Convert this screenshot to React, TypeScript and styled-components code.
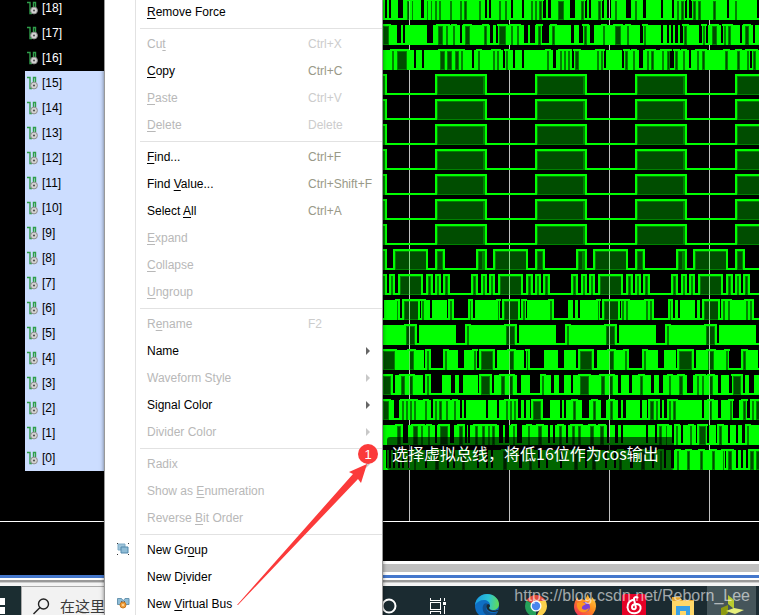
import React from "react";
import styled, { createGlobalStyle } from "styled-components";

const GlobalStyle = createGlobalStyle`
  * { box-sizing: border-box; }
  body { margin: 0; overflow: hidden; background: #000; }
  button, input { font: inherit; }
`;

const Page = styled.div`
  position: relative;
  display: flex;
  flex-direction: column;
  height: 100vh;
  overflow: hidden;
  font-family: "Liberation Sans", "Noto Sans CJK SC", sans-serif;
  font-size: 12px;
`;

const Workspace = styled.main`
  display: grid;
  grid-template-columns: 380px 1fr;
  flex: 1;
  min-height: 0;
  overflow: hidden;
  background: #000;
`;

const Pane = styled.section`
  display: flex;
  flex-direction: column;
  min-width: 0;
  overflow: hidden;
`;

const SignalList = styled.ul`
  height: 522px;
  flex: none;
  margin: 0;
  padding: 0 0 0 25px;
  list-style: none;
  overflow: hidden;
  border-bottom: 1px solid #fff;

  li:first-child { margin-top: -4px; }
`;

const SignalRow = styled.li<{ $selected: boolean }>`
  display: flex;
  align-items: center;
  gap: 2px;
  height: 25px;
  padding: 0 0 2px 2px;
  color: ${(p) => (p.$selected ? "#000" : "#fff")};
  background: ${(p) => (p.$selected ? "#ccddff" : "#000")};
`;

const WaveView = styled.div`
  flex: none;
  height: 522px;
  overflow: hidden;
  border-bottom: 1px solid #fff;

  svg { display: block; }
`;

const ScrollTrack = styled.div`
  height: 14px;
  margin-top: auto;
  flex: none;
  background: #c0c0c0;
  border: solid #fff;
  border-width: 3px 0;
`;

const FrameEdge = styled.div`
  flex: none;
  height: 11px;
  background: linear-gradient(#4477cc 0 3px, #fff 3px 5px, #999 5px 7px, #ccc 7px 8px, #f4f4f4 8px);
`;

const Menu = styled.div`
  position: absolute;
  top: 0;
  bottom: 0;
  left: 104px;
  width: 279px;
  overflow: hidden;
  border: solid #999;
  border-width: 0 1px;
  background: linear-gradient(90deg, #fff 30px, #e2e2e2 30px 31px, #fff 31px);
  box-shadow: 0 0 4px rgba(0, 0, 0, 0.5);

  > :first-child { margin-top: -2px; }
`;

const MenuItem = styled.button`
  display: grid;
  grid-template-columns: 42px 161px 1fr 16px;
  align-items: center;
  width: 100%;
  height: 27px;
  padding: 0;
  border: 0;
  background: none;
  color: #000;
  text-align: left;
  white-space: nowrap;

  &:disabled { color: #b8b8b8; }
  u { text-underline-offset: 2px; }
`;

const IconCell = styled.span`
  display: flex;
  padding-left: 12px;
`;

const Shortcut = styled.span<{ $dim?: boolean }>`
  color: ${(p) => (p.$dim ? "#cccccc" : "#999988")};
`;

const Divider = styled.hr`
  height: 1px;
  margin: 3px 0 1px 35px;
  border: 0;
  background: #e2e2e2;
`;

const Note = styled.div`
  position: absolute;
  top: 437px;
  left: 387px;
  padding: 0 15px 0 5px;
  border-radius: 3px;
  background: rgba(0, 0, 0, 0.6);
  color: #fff;
  font: 16px/33px "Noto Sans CJK SC", sans-serif;
  white-space: nowrap;
`;

const Marker = styled.svg`
  position: absolute;
  top: 440px;
  left: 230px;
  pointer-events: none;
`;

const Taskbar = styled.footer`
  display: flex;
  flex: none;
  height: 40px;
  margin-bottom: -11px;
  background: #1b2b31;
`;

const StartButton = styled.button`
  display: flex;
  align-items: center;
  width: 21px;
  padding: 0;
  border: 0;
  background: #1b2d31;
`;

const SearchBox = styled.label`
  display: flex;
  align-items: center;
  gap: 10px;
  width: 343px;
  padding-left: 11px;
  background: #f2f2f2;
  border: 1px solid #aaa;
  color: #222;

  input {
    flex: 1;
    min-width: 0;
    padding: 0;
    border: 0;
    background: none;
    font: 15px/24px "Noto Sans CJK SC", sans-serif;
  }
  input::placeholder { color: #3a3a3a; }
`;

const TaskButton = styled.button<{ $active?: boolean }>`
  display: flex;
  align-items: center;
  justify-content: center;
  flex: none;
  width: 49px;
  padding: 0;
  border: 0;
  background: ${(p) => (p.$active ? "#45555a" : "none")};
`;

const Watermark = styled.span`
  position: absolute;
  right: 9px;
  bottom: 8px;
  color: rgba(255, 255, 255, 0.6);
  font-size: 16px;
  line-height: 22px;
`;

/*
 * Waveform rows. Each run is a kind and the time at which it ends:
 * s = too dense to resolve, g = low, d = high. A "|" moves the time base
 * one screen of 570 units on; a row with a period repeats to the end.
 */
const UNITS = 3;
const START = 9;
const SPAN = 570;
const END = 1140;

interface Wave {
  runs: string;
  period?: boolean;
}

const square: Wave = { runs: "d15 s21 g165 s171 d309", period: true };

const waves: Wave[] = [
  { runs: "s15 g21 s27 g33 s54 g69 s80 d90 s96 d100 s123 g132 s141 d145 s152 d156 s165 d170 s176 d182 s210 d215 s240 d245 s252 d261 s297 d303 s315 g321 s327 g333 s357 d363 s375 d381 s393 g399 s426 g432 s453 d459 s465 d471 s477 d486 s489 g498 s504 g513 s534 d552 s570|g15 s33 d42 s45 g51 s57 g63 s84 d93 s96 g102 s111 g123 s135 d141 s168 g183 s195 d201 s219 g228 s273 g279 s306 g312 s321 d327 s333 d342 s345 g351 s357 g366 s369 d378 s384 d393 s429 d438 s471 g477 s495 d501 s561 g570" },
  { runs: "d27 s51 g63 s69 g75 s141 g159 s174 d189 s198 d204 s219 d225 s240 g246 s255 d270 s312 d321 s330 g339 s348 g354 s357 d378 s393 d399 s411 d417 s432 g444 s450 g465 s474 d483 s486 g507 s516 d525 s570|s3 g12 s27 g39 s42 d51 s60 g72 s99 d105 s135 d153 s171 d177 s210 g219 s222 d228 s273 g279 s291 g297 s303 g309 s315 g324 s330 g339 s342 d351 s387 g396 s399 d405 s408 g414 s426 d441 s453 g459 s462 d468 s474 d483 s510 g516 s525 d537 s549 g555 s570" },
  { runs: "s36 d42 s51 d81 s102 g108 s126 g132 s180 d195 s201 d216 s225 d237 s243 d249 s276 g282 s294 d300 s339 d345 s351 d357 s369 g375 s378 d384 s399 g405 s426 g432 s501 d507 s519 g528 s540 d546 s552 d558 s564 d570|s6 g12 s15 d27 s81 d87 s93 d99 s102 g108 s156 g162 s165 d174 s189 d195 s207 g219 s231 d237 s243 d252 s276 d282 s291 d300 g312 s315 d324 s339 d345 s357 g363 s381 d387 s396 d405 s465 d474 s501 d510 s531 d537 s540 g546 s549 d558 s570" },
  square, square, square, square, square, square, square,
  { runs: "d15 s21 g39 s45 d138 s144 g165 s171 d189 s195 g288 s294 d309", period: true },
  { runs: "d15 s21 g27 s33 d39 s45 g54 s60 d123 s129 g138 s144 d153 s159 g165 s171 d177 s183 g189 s195 d204 s210 g273 s279 d288 s294 g303 s309", period: true },
  { runs: "g12 s51 d54 s60 g66 s72 d114 s120 g123 s126 d133 s150 g156 s201 g204 s210 d216 s222 g264 s270 d273 s279 g285 s354 d357 s360 g366 s372 d414 s420 g423 s430 d435 s438 g440 s510 d516 s522 g564 s570|s9 g15 s24 g30 s84 d87 s90 g96 s102 d144 s150 g153 s156 d162 s168 d174 s228 d234 s240 d246 s252 g294 s300 d303 s309 g315 s324 g330 s375 g381 s390 g396 s402 d444 s450 g453 s459 d465 s474 d480 s528 d534 s540 d546 s552 g570" },
  { runs: "s78 d105 s111 g117 s228 g255 s261 d267 s309", period: true },
  { runs: "d45 s87 d102 s132 g135 s141 d147 s153 g189 s195 d201 s234 g252 s282 d288 s291 g297 s303 d339 s345 g351 s387 d402 s432 g438 s441 d444 s450 g492 s534 g552 s570|s18 g24 s30 d66 s72 g81 s117 d132 s165 d171 s177 g216 s222 d228 s264 g282 s318 g321 s327 d366 s372 g378 s414 d432 s468 d474 s477 g513 s519 d528 s564 g570" },
  { runs: "d33 s39 g45 s63 d75 s87 d99 s129 g135 s141 d147 s153 g186 s213 g225 s237 g249 s294 g297 s303 d330 s336 g342 s363 d375 s387 d399 s411 g423 s450 g480 s486 d492 s513 g522 s537 g552 s570|s3 g9 s30 d57 s93 d105 s117 d129 s144 g153 s177 g186 s210 d219 s243 g252 s267 g279 s297 d303 s327 d339 s351 g369 s381 d387 s396 d402 s417 d429 s444 g453 s477 g486 s489 d513 s519 g525 s537 g552 s570" },
  { runs: "d27 s42 g57 s66 d72 s78 d84 s90 d96 s102 d108 s135 d141 s153 g159 s165 d171 s177 d186 s198 d204 s222 d228 s240 g246 s252 g258 s318 g324 s351 g357 s378 d384 s390 d396 s402 d408 s414 g423 s432 g438 s450 g453 s459 d483 s489 g510 s540 g546 s552 g558 s570|s9 d18 s36 g57 s69 d78 s93 g108 s120 d129 s144 g153 s159 g168 s210 g216 s231 g234 s240 d252 s258 d264 s270 g276 s282 g291 s297 d303 s309 d318 s396 g402 s417 d426 s444 g453 s480 d486 s489 g507 s519 d528 s531 g540 s546 d552 s558 d570" },
  { runs: "s51 d63 s69 g84 s99 d114 s123 d129 s144 d150 s165 g171 s180 d204 s210 g222 s237 d249 s255 g261 s264 g270 s285 d294 s306 d315 s324 d330 s336 d345 s357 g369 s375 g387 s399 d405 s411 g426 s444 d450 s474 d486 s504 g510 s519 g525 s537 d546 s558 g564 s570|s6 d15 s24 d33 s60 d72 s90 d102 s111 g120 s135 g144 s153 g159 s228 g234 s255 g261 s267 d276 s288 d291 s306 g312 s318 d324 s333 g339 s360 d366 s378 g381 s387 d408 s411 g417 s438 g441 s447 d456 s474 g480 s498 g504 s516 g525 s531 d537 s570" },
  { runs: "s18 g21 s27 g33 s39 g45 s54 g60 s66 g72 s84 g90 s102 d108 s135 g141 s165 d177 s201 g207 s219 g225 s246 d255 s291 g297 s318 g324 s333 g339 s369 d381 s417 g426 s447 d456 s474 g480 s498 g504 s540 g546 s570|s12 d24 s45 g51 s66 d78 s105 g111 s132 g138 s147 d156 s180 g189 s213 d225 s246 g252 s270 d276 s282 g288 s303 g312 s321 d327 s351 d360 s390 d399 s426 d435 s459 d462 s465 g468 s474 d486 s498 g504 s513 g519 s528 g534 s540 d552 s558 d570" },
];

interface Run {
  kind: string;
  from: number;
  to: number;
}

function parse({ runs, period }: Wave): Run[] {
  const out: Run[] = [];
  let at = START;
  const read = (text: string, base: number) =>
    text.split(" ").forEach((token) => {
      const to = Number(token.slice(1)) + base;
      out.push({ kind: token[0], from: Math.round(at / UNITS), to: Math.round(to / UNITS) });
      at = to;
    });
  if (period) {
    for (let base = 0; base < END; base += 300) read(runs, base);
  } else {
    runs.split("|").forEach((part, i) => read(part, i * SPAN));
  }
  return out;
}

function WaveRow({ wave, y }: { wave: Wave; y: number }) {
  return (
    <g transform={`translate(0 ${y})`} shapeRendering="crispEdges">
      {parse(wave).map(({ kind, from, to }, i) => {
        const w = to - from;
        if (kind === "s") return <rect key={i} x={from} y={1} width={w} height={20} fill="#0f0" />;
        if (kind === "g") return <rect key={i} x={from} y={19} width={w} height={2} fill="#0f0" />;
        return (
          <g key={i}>
            <rect x={from - 2} width={w + 4} height={2} fill="#0f0" />
            <rect x={from} y={2} width={w} height={19} fill="#0f0" fillOpacity={0.3} />
            <path
              d={`M${from} 2h${w}v1h${-w}zM${from} 3h1v18h-1z${w > 1 && w < 14 ? `M${to - 1} 3h1v18h-1z` : ""}M${from} 20h${w}v1h${-w}z`}
              fill="#0f0"
              fillOpacity={0.3}
            />
          </g>
        );
      })}
    </g>
  );
}

function Waveforms() {
  return (
    <svg width="380" height="521" role="img" aria-label="Waveforms">
      {[29, 129, 229, 329].map((x) => (
        <rect key={x} x={x} width="1" height="521" fill="#c0c0c0" />
      ))}
      {waves.map((wave, i) => (
        <WaveRow key={i} wave={wave} y={i * 25 - 1} />
      ))}
    </svg>
  );
}

function SignalIcon() {
  return (
    <svg width="13" height="14" viewBox="0 0 13 14">
      <path d="M0 1.5h3v11h2M6.5 8V1.5h2V6" fill="none" stroke="#2f9e4a" strokeWidth="1.4" />
      <circle cx="7" cy="9.5" r="3.4" fill="#d4d4d4" stroke="#8d8d8d" />
      <circle cx="7" cy="9.5" r="1.1" fill="#555" />
    </svg>
  );
}

function GroupIcon() {
  return (
    <svg width="13" height="13" viewBox="0 0 13 13">
      <path d="M1 1h7v6H1z" fill="#9cc3da" stroke="#7fabc6" />
      <path d="M4 4h7v6H4z" fill="#8fbcd6" stroke="#5288ab" />
      <path d="M0 0h1v1H0zM11 0h1v1h-1zM0 11h1v1H0zM11 11h1v1h-1z" fill="#333" />
    </svg>
  );
}

function BusIcon() {
  return (
    <svg width="13" height="13" viewBox="0 0 13 13">
      <path d="M.5 1.5h4l1.5 2-1.5 4h-4zM12 1.500H8L6.500 3.500 8 7.500h4z" fill="#8fbcd6" stroke="#6795b0" />
      <path d="M4 4l2 2 2-2" fill="none" stroke="#666" />
      <circle cx="6" cy="8" r="3" fill="#f0a040" stroke="#c9781d" />
      <circle cx="6" cy="8" r="1" fill="#ffe2b0" />
    </svg>
  );
}

interface Item {
  label: string;
  keys?: string;
  off?: boolean;
  sub?: boolean;
  icon?: React.ReactNode;
}

const groups: Item[][] = [
  [{ label: "&Remove Force" }],
  [
    { label: "Cu&t", keys: "Ctrl+X", off: true },
    { label: "&Copy", keys: "Ctrl+C" },
    { label: "&Paste", keys: "Ctrl+V", off: true },
    { label: "&Delete", keys: "Delete", off: true },
  ],
  [
    { label: "&Find...", keys: "Ctrl+F" },
    { label: "Find &Value...", keys: "Ctrl+Shift+F" },
    { label: "Select &All", keys: "Ctrl+A" },
    { label: "&Expand", off: true },
    { label: "&Collapse", off: true },
    { label: "&Ungroup", off: true },
  ],
  [
    { label: "R&ename", keys: "F2", off: true },
    { label: "Name", sub: true },
    { label: "Waveform Style", sub: true, off: true },
    { label: "Signal Color", sub: true },
    { label: "Divider Color", sub: true, off: true },
  ],
  [
    { label: "Radix", sub: true, off: true },
    { label: "Show as &Enumeration", off: true },
    { label: "Reverse &Bit Order", off: true },
  ],
  [
    { label: "New Gr&oup", icon: <GroupIcon /> },
    { label: "New D&ivider" },
    { label: "New &Virtual Bus", icon: <BusIcon /> },
  ],
];

function Label({ text }: { text: string }) {
  const at = text.indexOf("&");
  if (at < 0) return <span>{text}</span>;
  return (
    <span>
      {text.slice(0, at)}
      <u>{text[at + 1]}</u>
      {text.slice(at + 2)}
    </span>
  );
}

function ContextMenu() {
  return (
    <Menu role="menu">
      {groups.map((items, g) => (
        <React.Fragment key={g}>
          {g > 0 && <Divider />}
          {items.map((item) => (
            <MenuItem key={item.label} role="menuitem" disabled={item.off}>
              <IconCell>{item.icon}</IconCell>
              <Label text={item.label} />
              <Shortcut $dim={item.off}>{item.keys}</Shortcut>
              {item.sub && (
                <svg width="5" height="8" viewBox="0 0 5 8">
                  <path d="M0 0l4 4-4 4z" fill={item.off ? "#c8c8c8" : "#666"} />
                </svg>
              )}
            </MenuItem>
          ))}
        </React.Fragment>
      ))}
    </Menu>
  );
}

const Cortana = () => (
  <svg width="18" height="18"><circle cx="9" cy="9" r="6.5" fill="none" stroke="#fff" strokeWidth="2" /></svg>
);

const TaskView = () => (
  <svg width="18" height="16" viewBox="0 0 18 16" fill="none" stroke="#fff" shapeRendering="crispEdges">
    <path d="M1.5 0v2.5h10V0M1.5 16v-2.5h10V16M1.5 4.5h10v7h-10zM15.5 0v3M15.5 8v8" />
    <path d="M14 4h3v3h-3z" fill="#fff" stroke="none" />
  </svg>
);

const Edge = () => (
  <svg width="26" height="26" viewBox="0 0 26 26">
    <defs>
      <linearGradient id="edgeTop" x1="0" x2="1" y1=".4" y2=".5">
        <stop offset="0" stopColor="#1a9be0" /><stop offset=".55" stopColor="#2cc3d5" /><stop offset="1" stopColor="#62dc55" />
      </linearGradient>
    </defs>
    <circle cx="13" cy="13" r="12" fill="#0f6fc4" />
    <path d="M1 12C2 5 7 1 13 1c7 0 12 5 12 10 0 4-3 6-6 6-2 0-4-1-4-2 0-1 1-1 1-3 0-3-3-5-6-5-4 0-7 2-9 5z" fill="url(#edgeTop)" />
    <path d="M10 11c-3 4-1 11 6 13 3 0 6-2 8-5-5 2-11 1-12-4 0-2 1-3 2-4-1-1-3-1-4 0z" fill="#11508f" />
    <path d="M14 11c-2 1-2 3-1 5 2 3 7 4 11 2 0-1 0-1-1-1-2 1-7 1-8-2 0-1 1-1 1-2s-1-2-2-2z" fill="#1b2b31" />
  </svg>
);

const Chrome = () => (
  <svg width="24" height="24" viewBox="0 0 24 24">
    <path d="M12 12L2.5 6.5a11 11 0 0 1 19 0z" fill="#e24a3b" />
    <path d="M12 12v11A11 11 0 0 1 2.5 6.5z" fill="#25a05a" />
    <path d="M12 7h9.8a11 11 0 0 1-9.800 16l4.300-8.500z" fill="#fcd04b" />
    <circle cx="12" cy="12" r="5.5" fill="#fff" /><circle cx="12" cy="12" r="4.2" fill="#4a86ee" />
  </svg>
);

const Firefox = () => (
  <svg width="24" height="24" viewBox="0 0 24 24">
    <defs>
      <linearGradient id="fox" x1="1" x2=".2" y1="0" y2="1">
        <stop offset="0" stopColor="#ffe14a" /><stop offset=".5" stopColor="#ff8a1e" /><stop offset="1" stopColor="#f0305c" />
      </linearGradient>
    </defs>
    <path d="M15 0c0 3 2 4 3 6 1-1 1-2 1-3 3 3 4 6 4 9a11 11 0 0 1-22 1c0-4 1-7 4-10 0 2 0 3 1 3 2-1 4-1 6 0 1-2 2-4 3-6z" fill="url(#fox)" />
    <circle cx="12" cy="13" r="5" fill="#7a41d8" />
    <path d="M4 9c4-2 7-1 9 1-1 1-3 1-4 3-1 3 4 4 7 1-1 6-11 6-12-2z" fill="#ff961f" />
  </svg>
);

const Netease = () => (
  <svg width="24" height="24" viewBox="0 0 24 24">
    <rect width="24" height="24" rx="2" fill="#e60026" />
    <path
      d="M15.5 3.500c-2-1-4 0-3.500 2l1.800 7.500c.4 3-3.800 3-3.800 0 0-3.500 7-4.500 8.500-.5 1.800 8-12 9.500-13 1 0-4 2-6.500 5-7.500"
      fill="none"
      stroke="#fff"
      strokeWidth="2"
      strokeLinecap="round"
    />
  </svg>
);

const Explorer = () => (
  <svg width="22" height="20" viewBox="0 0 22 20">
    <path d="M0 1h8l2 3h12v15H0z" fill="#e3a52d" />
    <path d="M0 5h22v14H0z" fill="#ffd768" />
    <path d="M4 10h14v10h-4v-5H8v5H4z" fill="#3aa0e4" />
  </svg>
);

const Vivado = () => (
  <svg width="24" height="24" viewBox="0 0 24 24">
    <path d="M8 1l6 5v9l-6-5z" fill="#b9cc30" />
    <path d="M1 14l7-3v8l-7 5z" fill="#8d9a10" />
    <path d="M6 17l8-3 10 2-9 4z" fill="#e6ef7c" />
  </svg>
);

const apps: [string, React.ReactNode][] = [
  ["Cortana", <Cortana />],
  ["Task View", <TaskView />],
  ["Edge", <Edge />],
  ["Chrome", <Chrome />],
  ["Firefox", <Firefox />],
  ["NetEase Music", <Netease />],
  ["File Explorer", <Explorer />],
  ["Vivado", <Vivado />],
];

export default function App() {
  return (
    <Page>
      <GlobalStyle />
      <Workspace>
        <Pane>
          <SignalList>
            {waves.map((_, i) => (
              <SignalRow key={i} $selected={18 - i < 16}>
                <SignalIcon />
                <span>[{18 - i}]</span>
              </SignalRow>
            ))}
          </SignalList>
        </Pane>
        <Pane>
          <WaveView><Waveforms /></WaveView>
          <ScrollTrack />
        </Pane>
      </Workspace>
      <FrameEdge />
      <Taskbar>
        <StartButton aria-label="Start">
          <svg width="6" height="16" viewBox="0 0 6 16"><path d="M0 0h5v7H0zM0 9h5v7H0z" fill="#fff" /></svg>
        </StartButton>
        <SearchBox>
          <svg width="17" height="17" viewBox="0 0 17 17" fill="none" stroke="#222" strokeWidth="1.4">
            <circle cx="10.5" cy="6" r="5" /><path d="M7 9.500L.5 16" />
          </svg>
          <input aria-label="搜索" placeholder="在这里输入你要搜索的内容" />
        </SearchBox>
        {apps.map(([name, icon]) => (
          <TaskButton key={name} aria-label={name} $active={name === "Vivado"}>{icon}</TaskButton>
        ))}
      </Taskbar>
      <Note>选择虚拟总线，将低16位作为cos输出</Note>
      <ContextMenu />
      <Marker width="150" height="170" viewBox="230 440 150 170">
        <path d="M237 605L353 474l-4-2 18-8-6 19-3-4L238 605z" fill="#fb3a3a" />
        <circle cx="368" cy="454" r="10" fill="#fb3a3a" />
        <text x="368" y="459" fill="#fff" fontSize="13" textAnchor="middle">1</text>
      </Marker>
      <Watermark>https://blog.csdn.net/Reborn_Lee</Watermark>
    </Page>
  );
}
